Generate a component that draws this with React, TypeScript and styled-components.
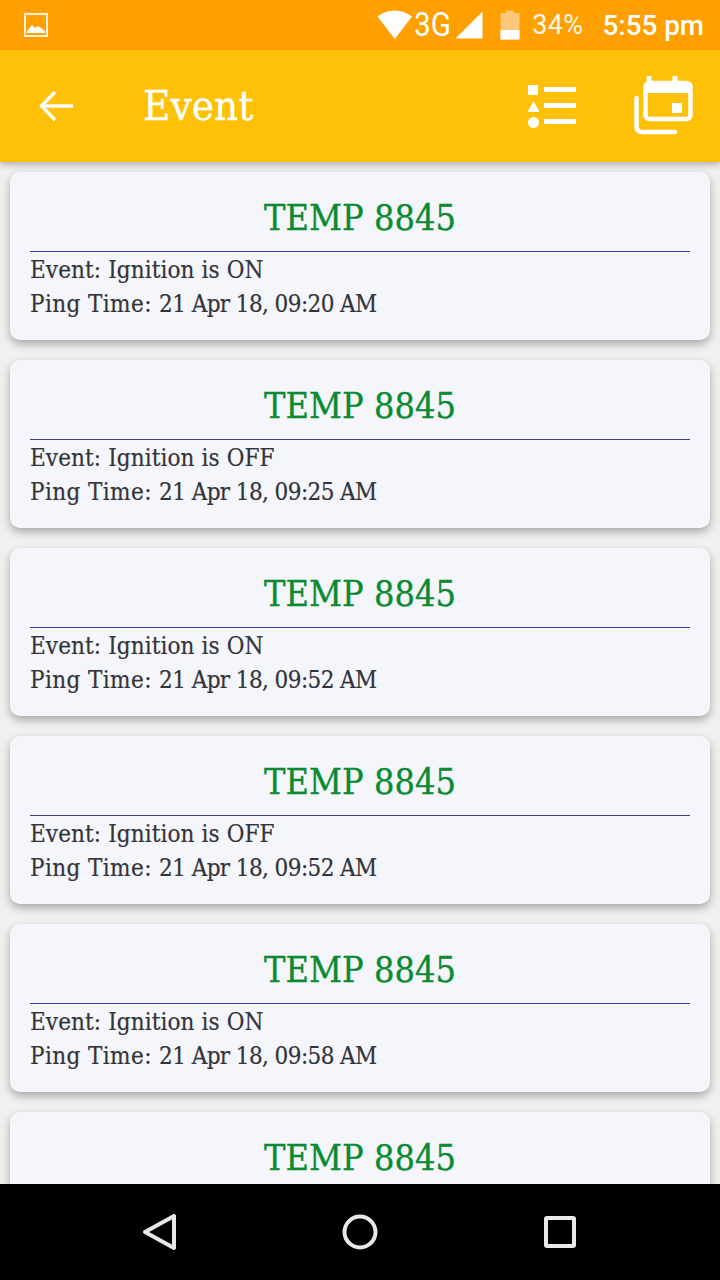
import React from "react";
import styled, { createGlobalStyle } from "styled-components";

const SLAB = `"DejaVu Serif Condensed", "DejaVu Serif", "Liberation Serif", serif`;

const GlobalStyle = createGlobalStyle`
  html, body {
    margin: 0;
    padding: 0;
    background: #f0f0f0;
  }
`;

// Whole phone screen
const Screen = styled.div`
  width: 720px;
  height: 1280px;
  display: flex;
  flex-direction: column;
  overflow: hidden;
  background-color: #f0f0f0;
`;

const StatusBar = styled.div`
  height: 50px;
  flex-shrink: 0;
  display: flex;
  align-items: center;
  padding: 0 16px 0 24px;
  box-sizing: border-box;
  background-color: #ff9f00;
  color: #fff;
  font-family: Roboto, sans-serif;
`;

const StatusRight = styled.div`
  margin-left: auto;
  display: flex;
  align-items: center;
`;

const NetworkLabel = styled.span`
  width: 41px;
  margin-left: 1px;
  font-size: 33px;
  line-height: 50px;
  transform: scaleX(0.9);
  transform-origin: left center;
  white-space: nowrap;
`;

const BatteryLevel = styled.span`
  margin-left: 12px;
  font-size: 27px;
  letter-spacing: 0.4px;
  opacity: 0.92;
`;

const Clock = styled.span`
  margin-left: 19px;
  font-size: 27.8px;
  font-weight: 500;
`;

const AppBar = styled.div`
  height: 112px;
  flex-shrink: 0;
  display: flex;
  align-items: center;
  padding: 0 26px 0 38px;
  box-sizing: border-box;
  background-color: #ffc107;
  box-shadow: 0 3px 6px rgba(0, 0, 0, 0.25);
  position: relative;
  z-index: 2;
  color: #fff;
`;

const Title = styled.div`
  margin-left: 69px;
  font-family: ${SLAB};
  font-size: 41.8px;
  line-height: 112px;
  -webkit-text-stroke: 0.3px #fff;
`;

const Actions = styled.div`
  margin-left: auto;
  display: flex;
  align-items: center;
  gap: 57px;
`;

const EventList = styled.div`
  flex: 1;
  min-height: 0;
  overflow: hidden;
  display: flex;
  flex-direction: column;
  gap: 20px;
  padding: 10px 10px 0;
`;

const Card = styled.div`
  flex-shrink: 0;
  height: 168px;
  box-sizing: border-box;
  padding: 0 20px;
  border-radius: 10px;
  background-color: #f5f6fb;
  box-shadow: 0 4px 8px rgba(0, 0, 0, 0.3);
`;

const CardTitle = styled.div`
  height: 80px;
  box-sizing: border-box;
  padding-top: 24px;
  border-bottom: 1px solid #3f3a9e;
  text-align: center;
  font-family: ${SLAB};
  font-size: 35.8px;
  line-height: 44px;
  color: #0b8a32;
  -webkit-text-stroke: 0.35px #0b8a32;
`;

const CardRow = styled.div`
  height: 34px;
  font-family: ${SLAB};
  font-size: 24px;
  letter-spacing: 0.1px;
  line-height: 37px;
  color: #33343a;
  white-space: nowrap;
  -webkit-text-stroke: 0.2px #33343a;
`;

const PingLabel = styled.span`
  letter-spacing: 0.4px;
`;

const PingValue = styled.span`
  letter-spacing: -0.6px;
`;

const NavBar = styled.div`
  height: 96px;
  flex-shrink: 0;
  display: grid;
  grid-template-columns: repeat(3, 200px);
  justify-content: center;
  justify-items: center;
  align-items: center;
  position: relative;
  z-index: 2;
  background-color: #000;
`;

const ImageIcon = () => (
  <svg width="24" height="24" viewBox="0 0 24 24" fill="none">
    <rect x="1" y="1" width="22" height="22" stroke="#fff" strokeOpacity="0.85" strokeWidth="2" />
    <path d="M3 18 L8 12 L11 15 L14 13 L21 18 V20 H3 Z" fill="#fff" />
  </svg>
);

const WifiIcon = () => (
  <svg width="36" height="30" viewBox="0 0 36 30">
    <path d="M0.5 6.5 C10 -1.5 25 -1.5 35 6.5 L17.8 29 Z" fill="#fff" />
  </svg>
);

const SignalIcon = () => (
  <svg width="28" height="28" viewBox="0 0 28 28">
    <path d="M27.5 0.5 V27.5 H0.5 Z" fill="#fff" />
  </svg>
);

const BatteryIcon = () => (
  <svg width="20" height="30" viewBox="0 0 20 30" style={{ marginLeft: 17 }}>
    <path d="M6 0.5 H14 V3 H19.5 V29.5 H0.5 V3 H6 Z" fill="#ffc77a" />
    <path d="M0.5 20 H19.5 V29.5 H0.5 Z" fill="#fff" />
  </svg>
);

const BackIcon = () => (
  <svg width="36" height="36" viewBox="0 0 36 36" fill="none" stroke="#fff" strokeWidth="3.4">
    <path d="M35 18 H4" />
    <path d="M17 4 L3.5 18 L17 32" />
  </svg>
);

const ShapeListIcon = () => (
  <svg width="50" height="46" viewBox="0 0 50 46" fill="#fff">
    <rect x="1" y="2" width="10" height="10" />
    <path d="M6.5 18 L12.5 29 H0.5 Z" />
    <circle cx="6.5" cy="39.5" r="5.5" />
    <rect x="17" y="4" width="32" height="5" />
    <rect x="17" y="20" width="32" height="5" />
    <rect x="17" y="36" width="32" height="5" />
  </svg>
);

const CalendarIcon = () => (
  <svg width="60" height="60" viewBox="0 0 60 60" fill="none">
    <path d="M15 1 V8 M41 1 V8" stroke="#fff" strokeWidth="5" strokeLinecap="round" />
    <rect x="11.5" y="7" width="45" height="36" rx="4" stroke="#fff" strokeWidth="4.5" />
    <rect x="10" y="6" width="48" height="11" rx="4" fill="#fff" />
    <rect x="38" y="27" width="10" height="10" fill="#fff" />
    <path d="M2.5 22 V50 Q2.5 56 8 56 H41" stroke="#fff" strokeWidth="4.5" strokeLinecap="round" />
  </svg>
);

const NavBackIcon = () => (
  <svg width="36" height="38" viewBox="0 0 36 38" fill="none" stroke="#e8e8e8" strokeWidth="4" strokeLinejoin="round">
    <path d="M32 3 V35 L3 19 Z" />
  </svg>
);

const NavHomeIcon = () => (
  <svg width="36" height="36" viewBox="0 0 36 36" fill="none" stroke="#e8e8e8" strokeWidth="4">
    <circle cx="18" cy="18" r="15.5" />
  </svg>
);

const NavRecentIcon = () => (
  <svg width="32" height="32" viewBox="0 0 32 32" fill="none" stroke="#e8e8e8" strokeWidth="4" strokeLinejoin="round">
    <rect x="2" y="2" width="28" height="28" rx="1" />
  </svg>
);

// The last card runs under the nav bar, only its heading shows
const events = [
  { event: "ON", time: "09:20" },
  { event: "OFF", time: "09:25" },
  { event: "ON", time: "09:52" },
  { event: "OFF", time: "09:52" },
  { event: "ON", time: "09:58" },
  { event: "", time: "" },
];

export default function App() {
  return (
    <Screen>
      <GlobalStyle />
      <StatusBar>
        <ImageIcon />
        <StatusRight>
          <WifiIcon />
          <NetworkLabel>3G</NetworkLabel>
          <SignalIcon />
          <BatteryIcon />
          <BatteryLevel>34%</BatteryLevel>
          <Clock>5:55 pm</Clock>
        </StatusRight>
      </StatusBar>
      <AppBar>
        <BackIcon />
        <Title>Event</Title>
        <Actions>
          <ShapeListIcon />
          <CalendarIcon />
        </Actions>
      </AppBar>
      <EventList>
        {events.map((item, i) => (
          <Card key={i}>
            <CardTitle>TEMP 8845</CardTitle>
            {item.event && (
              <>
                <CardRow>Event: Ignition is {item.event}</CardRow>
                <CardRow>
                  <PingLabel>Ping Time: </PingLabel>
                  <PingValue>21 Apr 18, {item.time} AM</PingValue>
                </CardRow>
              </>
            )}
          </Card>
        ))}
      </EventList>
      <NavBar>
        <NavBackIcon />
        <NavHomeIcon />
        <NavRecentIcon />
      </NavBar>
    </Screen>
  );
}
